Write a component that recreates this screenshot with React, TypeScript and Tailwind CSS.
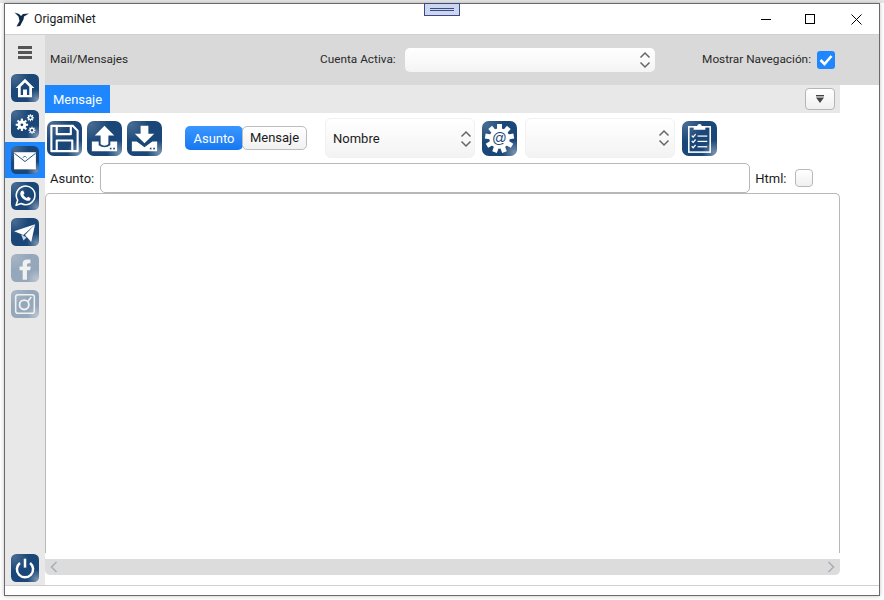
import React from "react";

// Glossy navy tile shared by every action button; glyphs are drawn on a 36-unit grid.
function Tile({ size, faded, children }: { size: number; faded?: boolean; children: React.ReactNode }) {
  const id = React.useId();
  return (
    <svg width={size} height={size} viewBox="0 0 36 36" className={`block shrink-0 ${faded ? "opacity-40" : ""}`}>
      <defs>
        <radialGradient id={`${id}a`} cx="0.12" cy="0.1" r="0.5">
          <stop offset="0" stopColor="#ffffff" stopOpacity="0.2" />
          <stop offset="1" stopColor="#ffffff" stopOpacity="0" />
        </radialGradient>
        <radialGradient id={`${id}b`} cx="0.92" cy="0.9" r="0.35">
          <stop offset="0" stopColor="#ffffff" stopOpacity="0.4" />
          <stop offset="1" stopColor="#ffffff" stopOpacity="0" />
        </radialGradient>
      </defs>
      <rect x="0" y="0" width="36" height="36" rx="7" fill="#1a4777" />
      <rect x="0" y="0" width="36" height="36" rx="7" fill={`url(#${id}a)`} />
      <rect x="0" y="0" width="36" height="36" rx="7" fill={`url(#${id}b)`} />
      {children}
    </svg>
  );
}

function Gear({ cx, cy, r, hole, teeth = 8 }: { cx: number; cy: number; r: number; hole: number; teeth?: number }) {
  const spokes = Array.from({ length: teeth }, (_, i) => (360 / teeth) * i);
  return (
    <g>
      {spokes.map((a) => (
        <rect
          key={a}
          x={cx - r * 0.24}
          y={cy - r * 1.42}
          width={r * 0.48}
          height={r * 0.8}
          fill="#fff"
          transform={`rotate(${a} ${cx} ${cy})`}
        />
      ))}
      <circle cx={cx} cy={cy} r={r} fill="#fff" />
      <circle cx={cx} cy={cy} r={hole} fill="#1a4777" />
    </g>
  );
}

const HomeGlyph = (
  <path d="M18 6 L30 18 H27 V30 H9 V18 H6 Z M12.5 27 H15.5 V20 H20.5 V27 H23.5 V16.5 L18 11 L12.5 16.5 Z" fill="#fff" fillRule="evenodd" />
);

const GearsGlyph = (
  <g>
    <Gear cx={14} cy={19} r={5.6} hole={1.8} />
    <Gear cx={25} cy={10} r={3.2} hole={1.5} />
    <Gear cx={27} cy={26} r={3.2} hole={1.5} />
  </g>
);

const MailGlyph = (
  <g>
    <rect x="4" y="8" width="28" height="22" fill="#fff" />
    <path d="M4.5 9.5 L18 20 L31.5 9.5" fill="none" stroke="#1a4777" strokeWidth="1.2" />
    <path d="M15 15 L18 13 L20 15" fill="none" stroke="#1a4777" strokeWidth="1" />
  </g>
);

const WhatsappGlyph = (
  <g>
    <path d="M6.5 30 L8.6 23.4 A12 12 0 1 1 13 27.6 Z" fill="none" stroke="#fff" strokeWidth="2" strokeLinejoin="round" />
    <path d="M13 12 L15.5 11 L17.4 14.6 L15.8 16.4 Q17.6 19.6 20.4 20.6 L22 19 L25.4 21 L24.4 23.4 Q22.4 25 18.8 23.6 Q13.6 21.2 12 16 Q11.6 13.6 13 12 Z" fill="#fff" />
  </g>
);

const TelegramGlyph = (
  <g fill="#fff">
    <path d="M4 17 L31 8 L16 22 Z" />
    <path d="M31 8 L18 22 L26 31 Z" />
    <path d="M13 21 L16 29 L20 25 Z" opacity="0.8" />
  </g>
);

const FacebookGlyph = (
  <path d="M15 33 V21 H11 V16 H15 V12 Q15 7 21 7 H25 V12 H22.5 Q20.5 12 20.5 14 V16 H25.5 L24.5 21 H20.5 V33 Z" fill="#fff" />
);

const InstagramGlyph = (
  <g fill="none" stroke="#fff">
    <rect x="6" y="6" width="24" height="24" rx="3" strokeWidth="2" />
    <circle cx="17" cy="19" r="6" strokeWidth="2.4" />
    <path d="M21.5 15 L26 9" strokeWidth="2" />
  </g>
);

const PowerGlyph = (
  <g fill="none" stroke="#fff" strokeWidth="3.2">
    <path d="M11.5 11.5 A10.4 10.4 0 1 0 24.5 11.5" />
    <path d="M18 6 V17.5" />
  </g>
);

const SaveGlyph = (
  <g fill="none" stroke="#fff" strokeWidth="2.2" strokeLinejoin="round">
    <path d="M4.5 5 H26.5 L31.5 10 V31 H4.5 Z" />
    <path d="M10 5 V13.5 H24.5 V5" />
    <path d="M10 31 V20 H26 V31" />
  </g>
);

const UploadGlyph = (
  <g fill="#fff">
    <path d="M18 5 L28 15 H22 V24 Q18 27 14 24 V15 H8 Z" />
    <path d="M5 21 H12 V25 Q18 29 24 25 V21 H31 V31 H5 Z" />
    <rect x="23.5" y="27.5" width="1.7" height="1.7" fill="#1a4777" />
    <rect x="27" y="27.5" width="1.7" height="1.7" fill="#1a4777" />
  </g>
);

const DownloadGlyph = (
  <g fill="#fff">
    <path d="M14 5 H22 V13 H28 L18 23 L8 13 H14 Z" />
    <path d="M5 21 H10 L18 27 L26 21 H31 V31 H5 Z" />
    <rect x="23.5" y="27.5" width="1.7" height="1.7" fill="#1a4777" />
    <rect x="27" y="27.5" width="1.7" height="1.7" fill="#1a4777" />
  </g>
);

const AtGearGlyph = (
  <g>
    <Gear cx={18} cy={18} r={10.5} hole={0} teeth={9} />
    <text x="18" y="23" textAnchor="middle" fontSize="15" fontFamily="'Liberation Sans', sans-serif" fill="#1a4777">@</text>
  </g>
);

const ClipboardGlyph = (
  <g>
    <rect x="7" y="6" width="22" height="26" fill="none" stroke="#fff" strokeWidth="1.6" />
    <path d="M12 9 V5.5 H15.5 Q16 3 18 3 Q20 3 20.5 5.5 H24 V9 Z" fill="#fff" />
    <g stroke="#fff" strokeWidth="1.3" fill="none">
      <path d="M10 15 L11.5 16.5 L14 13.5" />
      <path d="M10 20.5 L11.5 22 L14 19" />
      <path d="M10 26 L11.5 27.5 L14 24.5" />
      <path d="M16 15.5 H26" />
      <path d="M16 21 H26" />
      <path d="M16 26.5 H26" />
    </g>
  </g>
);

const SpinnerArrows = () => (
  <svg width="12" height="20" viewBox="0 0 12 20" className="block shrink-0" fill="none" strokeWidth="1.5" stroke="#666">
    <path d="M1.5 7.5 L6 3 L10.5 7.5" />
    <path d="M1.5 12.5 L6 17 L10.5 12.5" />
  </svg>
);

const CheckMark = () => (
  <svg width="18" height="18" viewBox="0 0 18 18" fill="none" className="block">
    <path d="M3.5 9 L7.5 13 L14.5 5" stroke="#fff" strokeWidth="2.6" />
  </svg>
);

const navItems: { glyph: React.ReactNode; active?: boolean; faded?: boolean }[] = [
  { glyph: HomeGlyph },
  { glyph: GearsGlyph },
  { glyph: MailGlyph, active: true },
  { glyph: WhatsappGlyph },
  { glyph: TelegramGlyph },
  { glyph: FacebookGlyph, faded: true },
  { glyph: InstagramGlyph, faded: true },
];

export default function App() {
  return (
    <div className="relative w-[884px] h-[600px] overflow-hidden bg-white text-[13px] text-[#1c1c1c] font-['Roboto',sans-serif]">
      <div className="h-[3px] bg-[#e6e6e6]" />
      <div className="ml-[4px] w-[876px] h-[593px] border border-[#6a6a6a] flex flex-col bg-white shadow-[0_0_4px_rgba(0,0,0,0.25)]">
        {/* Title bar */}
        <div className="h-[31px] shrink-0 flex items-center border-b border-[#d0d0d0] pl-[9px]">
          <svg width="16" height="16" viewBox="0 0 16 16" className="block shrink-0">
            <path d="M0.5 1.5 L5 3 L7 5 L9 3 L15 2.5 L10 5.5 L9.5 8.5 L6 15 L2.5 15.5 L5.5 10 L4.5 5.5 Z" fill="#12294a" />
          </svg>
          <span className="ml-[4px] text-[12.2px]">OrigamiNet</span>
          <div className="ml-auto flex items-center">
            <div className="w-[45px] h-[30px] flex items-center justify-center">
              <div className="w-[10px] h-px bg-black" />
            </div>
            <div className="w-[45px] h-[30px] flex items-center justify-center -translate-x-px">
              <div className="w-[10px] h-[10px] border border-black" />
            </div>
            <div className="w-[46px] h-[30px] flex items-center justify-center">
              <svg width="11" height="11" viewBox="0 0 11 11" stroke="#000" fill="none" className="block">
                <path d="M0.5 0.5 L10.5 10.5 M10.5 0.5 L0.5 10.5" />
              </svg>
            </div>
          </div>
        </div>

        <div className="flex-1 min-h-0 flex">
          {/* Navigation rail */}
          <div className="w-[40px] shrink-0 bg-[#e8e8e8] flex flex-col">
            <div className="h-[35px] flex flex-col items-center justify-center gap-[2px]">
              <div className="w-[14px] h-[3px] bg-[#555]" />
              <div className="w-[14px] h-[3px] bg-[#555]" />
              <div className="w-[14px] h-[3px] bg-[#555]" />
            </div>
            {navItems.map((item, i) => (
              <div key={i} className={`h-[36px] flex items-center justify-center ${item.active ? "bg-[#1e87ff]" : ""}`}>
                <Tile size={28} faded={item.faded}>{item.glyph}</Tile>
              </div>
            ))}
            <div className="mt-auto mb-[3px] flex justify-center">
              <Tile size={28}>{PowerGlyph}</Tile>
            </div>
          </div>

          <div className="flex-1 min-w-0 flex flex-col">
            {/* Account header */}
            <div className="h-[50px] shrink-0 bg-[#d9d9d9] flex items-center pl-[5px] pr-[44px] text-[11.8px] text-[#2a2a2a]">
              <span className="w-[79px] whitespace-nowrap">Mail/Mensajes</span>
              <span className="ml-[191px] w-[77px] whitespace-nowrap">Cuenta Activa:</span>
              <div className="ml-[8px] w-[250px] h-[24px] rounded-[5px] bg-gradient-to-b from-white to-[#f4f4f4] flex items-center justify-end pr-[4px]">
                <SpinnerArrows />
              </div>
              <span className="ml-auto whitespace-nowrap">Mostrar Navegación:</span>
              <div className="ml-[6px] w-[18px] h-[18px] rounded-[3px] bg-[#1e87ff]">
                <CheckMark />
              </div>
            </div>

            <div className="flex-1 min-h-0 w-[795px] flex flex-col">
              {/* Tab strip */}
              <div className="h-[28px] shrink-0 bg-[#e8e8e8] flex items-start justify-between pr-[5px]">
                <div className="h-[28px] w-[65px] bg-[#1e87ff] text-white flex items-center justify-center pt-px">Mensaje</div>
                <div className="mt-[3px] w-[30px] h-[22px] rounded-[4px] border border-[#b5b5b5] bg-gradient-to-b from-white to-[#f0f0f0] flex items-center justify-center">
                  <svg width="10" height="9" viewBox="0 0 10 9" className="block">
                    <rect x="1" y="0" width="8" height="1.4" fill="#444" />
                    <path d="M1 2.5 H9 L5 8 Z" fill="#444" />
                  </svg>
                </div>
              </div>

              {/* Toolbar */}
              <div className="h-[50px] shrink-0 flex items-center pl-[2px]">
                <div className="flex gap-[5px]">
                  <Tile size={35}>{SaveGlyph}</Tile>
                  <Tile size={35}>{UploadGlyph}</Tile>
                  <Tile size={35}>{DownloadGlyph}</Tile>
                </div>
                <div className="ml-[23px] flex">
                  <div className="w-[58px] h-[24px] rounded-[5px] bg-gradient-to-b from-[#3a97ff] to-[#1478f0] text-white flex items-center justify-center pt-px">Asunto</div>
                  <div className="w-[65px] -ml-px h-[24px] rounded-[5px] border border-[#bcbcbc] bg-gradient-to-b from-white to-[#f1f1f1] flex items-center justify-center">Mensaje</div>
                </div>
                <div className="ml-[18px] w-[150px] h-[40px] rounded-[6px] border border-[#f1f1f1] bg-gradient-to-b from-white to-[#f3f3f3] flex items-center justify-between pl-[7px] pr-[2px] pt-px">
                  <span>Nombre</span>
                  <SpinnerArrows />
                </div>
                <div className="ml-[7px]">
                  <Tile size={35}>{AtGearGlyph}</Tile>
                </div>
                <div className="ml-[8px] w-[150px] h-[40px] rounded-[6px] border border-[#f1f1f1] bg-gradient-to-b from-white to-[#f3f3f3] flex items-center justify-end pr-[4px]">
                  <SpinnerArrows />
                </div>
                <div className="ml-[7px]">
                  <Tile size={35}>{ClipboardGlyph}</Tile>
                </div>
              </div>

              {/* Subject row */}
              <div className="h-[30px] shrink-0 flex items-center pl-[5px]">
                <span className="pt-px">Asunto:</span>
                <div className="ml-[6px] w-[650px] h-[30px] rounded-[5px] border border-[#b8b8b8] bg-white" />
                <span className="ml-[5px] pt-px">Html:</span>
                <div className="ml-[9px] w-[18px] h-[18px] rounded-[4px] border border-[#b8b8b8] bg-gradient-to-b from-white to-[#f0f0f0]" />
              </div>

              {/* Message body and its horizontal scroll bar */}
              <div className="h-[360px] shrink-0 rounded-t-[5px] border-x border-t border-[#b8b8b8]" />
              <div className="mt-[6px] h-[16px] shrink-0 rounded-b-[5px] bg-[#dcdcdc] flex items-center justify-between px-[5px]">
                <svg width="8" height="12" viewBox="0 0 8 12" fill="none" stroke="#a8afb8" strokeWidth="1.6" className="block">
                  <path d="M6.5 1 L1.5 6 L6.5 11" />
                </svg>
                <svg width="8" height="12" viewBox="0 0 8 12" fill="none" stroke="#a8afb8" strokeWidth="1.6" className="block">
                  <path d="M1.5 1 L6.5 6 L1.5 11" />
                </svg>
              </div>
            </div>
          </div>
        </div>

        {/* Status strip */}
        <div className="h-[10px] shrink-0 border-t border-[#d0d0d0]" />
      </div>

      {/* Drag handle overlapping the window's top edge */}
      <div className="absolute left-[424px] top-[3px] w-[36px] h-[13px] bg-[#ccd6f0] border border-[#3c4a80] flex flex-col items-center justify-center gap-[1px]">
        <div className="w-[24px] h-px bg-[#3c4a80]" />
        <div className="w-[24px] h-px bg-[#3c4a80]" />
      </div>
    </div>
  );
}
